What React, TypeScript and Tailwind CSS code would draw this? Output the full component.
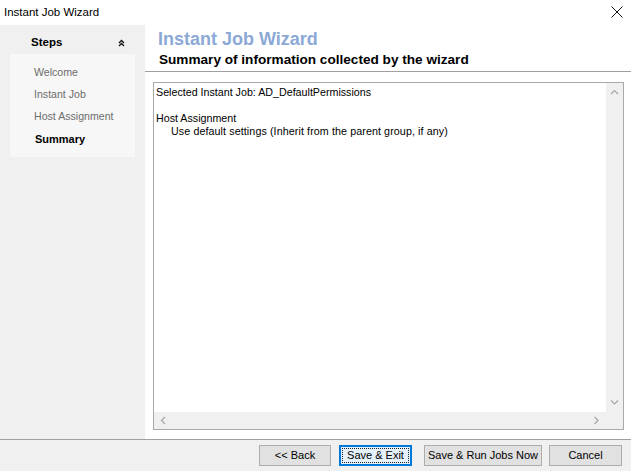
import React from "react";

const steps = [
  { label: "Welcome", done: true },
  { label: "Instant Job", done: true },
  { label: "Host Assignment", done: true },
  { label: "Summary", current: true },
];

function WinButton({ children, focused }: { children: React.ReactNode; focused?: boolean }) {
  return (
    <button
      type="button"
      className={
        focused
          ? "flex h-[21px] w-full items-center justify-center border-2 border-[#0078d7] bg-[#e5f1fb] p-[1px]"
          : "flex h-[21px] w-full items-center justify-center border border-[#adadad] bg-[#e1e1e1]"
      }
    >
      <span
        className={
          focused
            ? "flex h-full w-full items-center justify-center whitespace-nowrap border border-dotted border-[#222] text-[11px] leading-none text-black"
            : "whitespace-nowrap text-[11px] leading-none text-black"
        }
      >
        {children}
      </span>
    </button>
  );
}

function Chevron({ dir }: { dir: "up" | "down" | "left" | "right" }) {
  const d = {
    up: "M1 5 L4.5 1.5 L8 5",
    down: "M1 1.5 L4.5 5 L8 1.5",
    left: "M5 1 L1.5 4.5 L5 8",
    right: "M1.5 1 L5 4.5 L1.5 8",
  }[dir];
  const vertical = dir === "up" || dir === "down";
  return (
    <svg width={vertical ? 9 : 7} height={vertical ? 7 : 9} viewBox={vertical ? "0 0 9 7" : "0 0 7 9"}>
      <path d={d} fill="none" stroke="#a6a6a6" strokeWidth="1.2" />
    </svg>
  );
}

export default function App() {
  return (
    <div
      className="flex h-[471px] w-[631px] flex-col overflow-hidden bg-white text-black"
      style={{ fontFamily: "'Liberation Sans', Arial, sans-serif" }}
    >
      {/* title bar */}
      <div className="flex h-[25px] shrink-0 items-center justify-between bg-white pl-[4px] pr-[8px]">
        <span className="text-[11.5px] text-black">Instant Job Wizard</span>
        <svg width="12" height="12" viewBox="0 0 12 12" className="mb-[2px]">
          <path d="M0.5 0.5 L11.5 11.5 M11.5 0.5 L0.5 11.5" stroke="#111" strokeWidth="1" />
        </svg>
      </div>

      <div className="flex h-[414px] shrink-0">
        {/* steps panel */}
        <aside className="w-[145px] shrink-0 bg-[#f0f0f0]">
          <div className="flex h-[29px] items-center justify-between pl-[31px] pr-[20px] pt-[6px]">
            <span className="text-[11.5px] font-bold">Steps</span>
            <svg width="7" height="8" viewBox="0 0 7 8">
              <path d="M1 4 L3.5 1.5 L6 4 M1 7 L3.5 4.5 L6 7" fill="none" stroke="#111" strokeWidth="1.3" />
            </svg>
          </div>
          <div className="mx-[10px] h-[103px] bg-[#f7f7f7] pl-[24px] pt-[8px]">
            {steps.map((s) => (
              <div
                key={s.label}
                className={
                  s.current
                    ? "flex h-[22px] items-center whitespace-nowrap pl-[1px] text-[11px] font-bold text-black"
                    : "flex h-[22px] items-center whitespace-nowrap text-[10.6px] text-[#6d6d6d]"
                }
              >
                {s.label}
              </div>
            ))}
          </div>
        </aside>

        {/* main */}
        <main className="flex min-w-0 flex-1 flex-col bg-white">
          <div className="h-[47px] shrink-0 border-b border-[#a0a0a0] pl-[13px] pt-[4px]">
            <div className="h-[21px] text-[18px] font-bold leading-[21px] text-[#8ca9d6]">Instant Job Wizard</div>
            <div className="h-[20px] pl-[1px] text-[13.6px] font-bold leading-[20px] text-black">
              Summary of information collected by the wizard
            </div>
          </div>
          <div className="flex min-h-0 flex-1 pb-[9px] pl-[8px] pr-[7px] pt-[10px]">
            <div className="flex flex-1 flex-col border border-[#a9a9a9]">
              <div className="flex min-h-0 flex-1">
                <div className="flex-1 pl-[2px] pt-[3px] text-[10.7px] leading-[13px]">
                  <div>Selected Instant Job: AD_DefaultPermissions</div>
                  <div className="h-[13px]" />
                  <div>Host Assignment</div>
                  <div className="pl-[15px] tracking-[0.1px]">Use default settings (Inherit from the parent group, if any)</div>
                </div>
                <div className="flex w-[17px] shrink-0 flex-col items-center justify-between bg-[#f0f0f0] py-[6px]">
                  <Chevron dir="up" />
                  <Chevron dir="down" />
                </div>
              </div>
              <div className="flex h-[17px] shrink-0">
                <div className="flex flex-1 items-center justify-between bg-[#f0f0f0] px-[6px]">
                  <Chevron dir="left" />
                  <Chevron dir="right" />
                </div>
                <div className="w-[17px] bg-[#f0f0f0]" />
              </div>
            </div>
          </div>
        </main>
      </div>

      {/* footer */}
      <div className="flex h-[32px] shrink-0 items-start border-t border-[#a0a0a0] bg-[#f0f0f0] pt-[5px]">
        <div className="ml-[259px] flex">
          <div className="w-[72px]">
            <WinButton>&lt;&lt; Back</WinButton>
          </div>
          <div className="ml-[8px] w-[73px]">
            <WinButton focused>Save &amp; Exit</WinButton>
          </div>
          <div className="ml-[12px] w-[118px]">
            <WinButton>Save &amp; Run Jobs Now</WinButton>
          </div>
          <div className="ml-[7px] w-[73px]">
            <WinButton>Cancel</WinButton>
          </div>
        </div>
      </div>
    </div>
  );
}
